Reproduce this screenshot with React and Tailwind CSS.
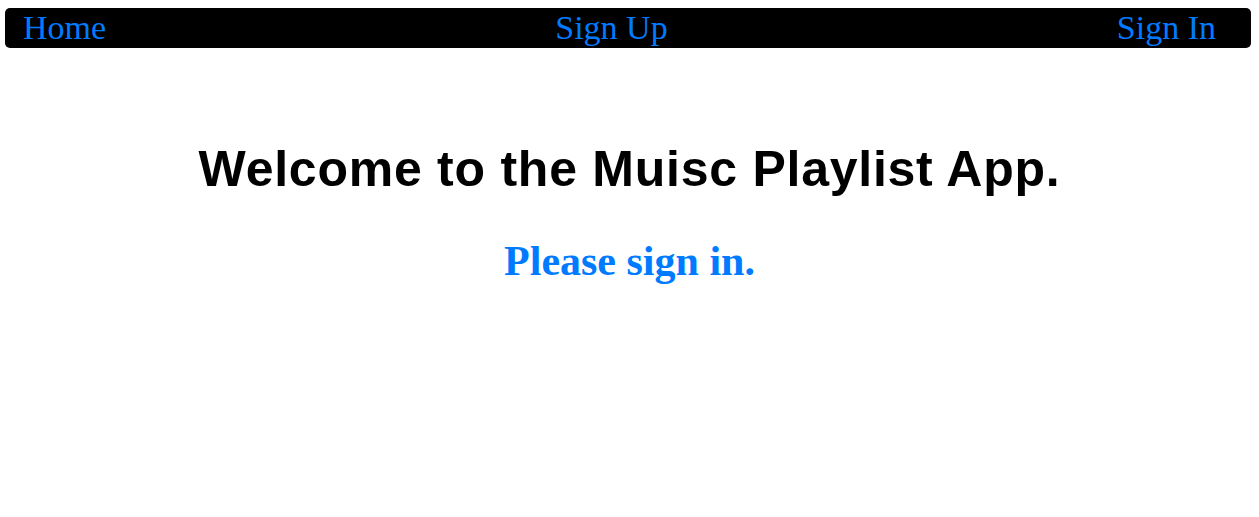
export default function App() {
  return (
    <div className="min-h-screen bg-white">
      {/* Nawigacja */}
      <nav className="mt-2 ml-[5px] mr-[8px] h-[40px] bg-black rounded-[5px] flex items-center justify-between pl-[18px] pr-[35px] font-['Liberation_Serif',serif] text-[34px] text-[#007bff] leading-none">
        <a href="#">Home</a>
        <a href="#">Sign Up</a>
        <a href="#">Sign In</a>
      </nav>

      <main className="flex flex-col items-center pt-[96px]">
        <h1 className="font-['Liberation_Sans',sans-serif] font-bold text-[50px] tracking-[0.75px] leading-none text-black">
          Welcome to the Muisc Playlist App.
        </h1>
        <h2 className="mt-[46px] font-['Liberation_Serif',serif] font-bold text-[42px] leading-none text-[#007bff]">
          Please sign in.
        </h2>
      </main>
    </div>
  )
}
